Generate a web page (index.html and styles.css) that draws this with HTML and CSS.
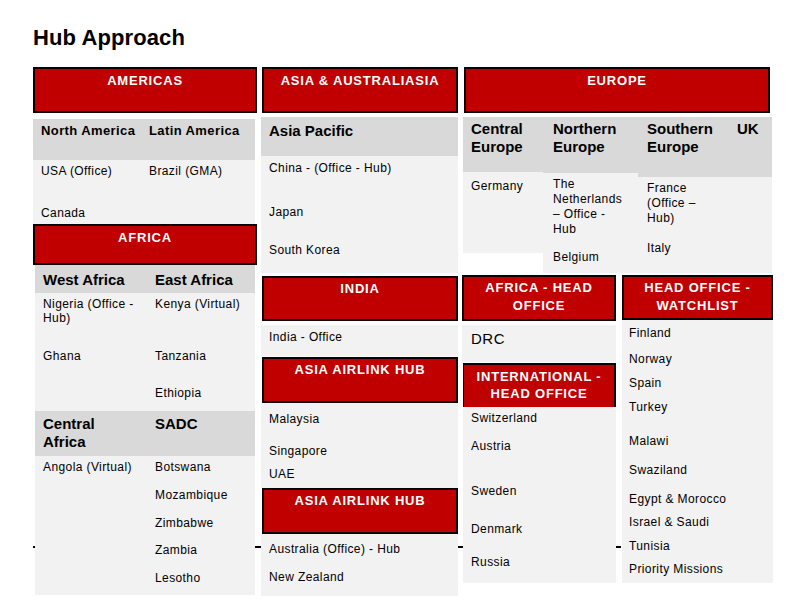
FILE: index.html
```html
<!DOCTYPE html>
<html lang="en">
<head>
<meta charset="utf-8">
<title>Hub Approach</title>
<link rel="stylesheet" href="styles.css">
</head>
<body>
<div class="page">
  <h1 class="title">Hub Approach</h1>
  <div class="rule"></div>
  <div class="board">

    <!-- Column 1 -->
    <div class="col col-1">
      <div class="hd hd-americas">AMERICAS</div>
      <div class="sub sub-am-head pair pair-am">
        <div class="sh13">North America</div>
        <div class="sh13">Latin America</div>
      </div>
      <div class="body body-am pair pair-am">
        <div>
          <div class="t">USA (Office)</div>
          <div class="t mt28">Canada</div>
        </div>
        <div>
          <div class="t">Brazil (GMA)</div>
        </div>
      </div>
      <div class="hd hd-africa">AFRICA</div>
      <div class="sub sub-af-head pair pair-af inset">
        <div class="sh15">West Africa</div>
        <div class="sh15">East Africa</div>
      </div>
      <div class="body body-af pair pair-af inset">
        <div>
          <div class="t">Nigeria (Office -<br>Hub)</div>
          <div class="t mt24">Ghana</div>
        </div>
        <div>
          <div class="t">Kenya (Virtual)</div>
          <div class="t mt38">Tanzania</div>
          <div class="t mt23">Ethiopia</div>
        </div>
      </div>
      <div class="sub sub-ca-head pair pair-af inset">
        <div class="sh15">Central<br>Africa</div>
        <div class="sh15">SADC</div>
      </div>
      <div class="body body-ca pair pair-af inset">
        <div>
          <div class="t">Angola (Virtual)</div>
        </div>
        <div>
          <div class="t">Botswana</div>
          <div class="t mt14">Mozambique</div>
          <div class="t mt14">Zimbabwe</div>
          <div class="t mt13">Zambia</div>
          <div class="t mt14">Lesotho</div>
        </div>
      </div>
    </div>

    <!-- Column 2 -->
    <div class="col col-2">
      <div class="hd hd-asia">ASIA &amp; AUSTRALIASIA</div>
      <div class="sub sub-ap-head">
        <div class="sh15">Asia Pacific</div>
      </div>
      <div class="body body-ap">
        <div class="t">China - (Office - Hub)</div>
        <div class="t mt30">Japan</div>
        <div class="t mt24">South Korea</div>
      </div>
      <div class="hd hd-india">INDIA</div>
      <div class="body body-india">
        <div class="t">India - Office</div>
      </div>
      <div class="hd hd-airlink1">ASIA AIRLINK HUB</div>
      <div class="body body-air1">
        <div class="t">Malaysia</div>
        <div class="t mt18">Singapore</div>
        <div class="t mt9">UAE</div>
      </div>
      <div class="hd hd-airlink2">ASIA AIRLINK HUB</div>
      <div class="body body-air2">
        <div class="t">Australia (Office) - Hub</div>
        <div class="t mt14">New Zealand</div>
      </div>
    </div>

    <!-- Right area -->
    <div class="col col-3">
      <div class="hd hd-europe">EUROPE</div>
      <div class="eu">
        <div class="eu-col eu-central">
          <div class="sub eu-head-c"><div class="sh15">Central<br>Europe</div></div>
          <div class="body eu-body-c">
            <div class="t">Germany</div>
          </div>
        </div>
        <div class="eu-col eu-northern">
          <div class="sub eu-head-n"><div class="sh15">Northern<br>Europe</div></div>
          <div class="body eu-body-n">
            <div class="t t15">The<br>Netherlands<br>– Office -<br>Hub</div>
            <div class="t mt13">Belgium</div>
          </div>
        </div>
        <div class="eu-col eu-southern">
          <div class="sub eu-head-s">
            <div class="sh15">Southern<br>Europe</div>
            <div class="sh15">UK</div>
          </div>
          <div class="body eu-body-s">
            <div class="t t15">France<br>(Office –<br>Hub)</div>
            <div class="t mt15">Italy</div>
          </div>
        </div>
      </div>

      <div class="lower">
        <div class="col col-a">
          <div class="hd hd-two hd-afho">AFRICA - HEAD OFFICE</div>
          <div class="body body-drc">
            <div class="t-big">DRC</div>
          </div>
          <div class="hd hd-two hd-intl">INTERNATIONAL -<br>HEAD OFFICE</div>
          <div class="body body-intl">
            <div class="t">Switzerland</div>
            <div class="t mt14">Austria</div>
            <div class="t mt31">Sweden</div>
            <div class="t mt24">Denmark</div>
            <div class="t mt19">Russia</div>
          </div>
        </div>
        <div class="col col-b">
          <div class="hd hd-two hd-watch">HEAD OFFICE - WATCHLIST</div>
          <div class="body body-watch">
            <div class="t">Finland</div>
            <div class="t mt12">Norway</div>
            <div class="t mt10">Spain</div>
            <div class="t mt10">Turkey</div>
            <div class="t mt20">Malawi</div>
            <div class="t mt15">Swaziland</div>
            <div class="t mt15">Egypt &amp; Morocco</div>
            <div class="t mt9">Israel &amp; Saudi</div>
            <div class="t mt10">Tunisia</div>
            <div class="t mt9">Priority Missions</div>
          </div>
        </div>
      </div>
    </div>

  </div>
</div>
</body>
</html>
```

FILE: styles.css
```css
* { box-sizing: border-box; }

html {
  margin: 0;
  padding: 0;
  background: #ffffff;
}

body {
  margin: 0;
  padding: 0;
  font-family: "Liberation Sans", Arial, sans-serif;
  color: #000;
  width: 800px;
  height: 600px;
  overflow: hidden;
}

.page {
  position: relative;
  padding: 25px 0 0 33px;
}

.title {
  margin: 0;
  font: bold 22px/26px "Liberation Sans", Arial, sans-serif;
  letter-spacing: 0.1px;
}

.rule {
  position: absolute;
  left: 33px;
  top: 546px;
  width: 588px;
  height: 2px;
  background: #000;
  z-index: -1;
}

.board {
  display: flex;
  align-items: flex-start;
  gap: 4px;
  margin-top: 16px;
}

.col {
  display: flex;
  flex-direction: column;
}

.col-1 { width: 224px; }
.col-2 { width: 197px; }
.col-3 { width: 311px; }

/* red header boxes */
.hd {
  background: #c00000;
  border: 2px solid #0d0000;
  color: #fff;
  font: bold 13px/16px "Liberation Sans", Arial, sans-serif;
  letter-spacing: 0.8px;
  text-align: center;
  padding: 4px 4px 0;
}

.hd-americas { height: 46px; }
.hd-africa { height: 41px; }
.hd-asia { height: 46px; margin-left: 1px; }
.hd-india { height: 45px; margin-top: 3px; margin-left: 1px; padding-top: 3px; }
.hd-airlink1 { height: 46px; margin-top: 1px; margin-left: 1px; padding-top: 3px; }
.hd-airlink2 { height: 46px; margin-left: 1px; padding-top: 3px; }
.hd-europe { height: 46px; margin: 0 3px 0 2px; padding-top: 4px; }

.hd-two {
  line-height: 18px;
  padding-top: 2px;
}
.hd-afho { height: 46px; }
.hd-watch { height: 45px; }
.hd-intl {
  height: 44px;
  margin-top: 1px;
  margin-left: 1px;
  line-height: 17px;
  padding-top: 3px;
  border-left-width: 1px;
  border-bottom: none;
}

/* grey sub heads and light bodies */
.sub { background: #d9d9d9; }
.body { background: #f2f2f2; }

.pair {
  display: grid;
  padding-left: 8px;
}
.pair-am { grid-template-columns: 108px 1fr; }
.pair-af { grid-template-columns: 112px 1fr; }
.inset { margin-left: 2px; margin-right: 2px; }

.sub-am-head { height: 41px; margin-top: 6px; margin-right: 2px; padding-top: 4px; }
.body-am { height: 64px; margin-right: 2px; padding-top: 4px; }

.sub-af-head { height: 28px; padding-top: 6px; }
.body-af { height: 118px; padding-top: 4px; }
.sub-ca-head { height: 45px; padding-top: 4px; }
.body-ca { height: 139px; padding-top: 4px; }

.sub-ap-head { height: 39px; margin-top: 4px; padding: 5px 0 0 8px; }
.body-ap { height: 117px; padding: 5px 0 0 8px; }
.body-india { height: 31px; margin-top: 4px; padding: 5px 0 0 8px; }
.body-air1 { height: 85px; padding: 9px 0 0 8px; }
.body-air2 { height: 62px; padding: 8px 0 0 8px; }

/* text styles */
.sh13 {
  font: bold 13px/15px "Liberation Sans", Arial, sans-serif;
  letter-spacing: 0.4px;
}
.sh15 {
  font: bold 15px/18px "Liberation Sans", Arial, sans-serif;
}
.t {
  font: 12px/14px "Liberation Sans", Arial, sans-serif;
  letter-spacing: 0.4px;
  white-space: nowrap;
}
.t15 { line-height: 15px; }
.t-big {
  font: 15px/18px "Liberation Sans", Arial, sans-serif;
  letter-spacing: 0.5px;
}

.mt9 { margin-top: 9px; }
.mt10 { margin-top: 10px; }
.mt12 { margin-top: 12px; }
.mt13 { margin-top: 13px; }
.mt14 { margin-top: 14px; }
.mt15 { margin-top: 15px; }
.mt18 { margin-top: 18px; }
.mt19 { margin-top: 19px; }
.mt20 { margin-top: 20px; }
.mt23 { margin-top: 23px; }
.mt24 { margin-top: 24px; }
.mt28 { margin-top: 28px; }
.mt30 { margin-top: 30px; }
.mt31 { margin-top: 31px; }
.mt38 { margin-top: 38px; }

/* Europe block */
.eu {
  display: flex;
  align-items: flex-start;
  margin: 4px 1px 0 1px;
  height: 156px;
}
.eu-col { display: flex; flex-direction: column; }
.eu-central { width: 80px; }
.eu-northern { width: 95px; }
.eu-southern { width: 134px; }

.eu-head-c { height: 55px; padding: 3px 0 0 8px; }
.eu-body-c { height: 81px; padding: 7px 0 0 8px; }

.eu-head-n { height: 56px; padding: 3px 0 0 10px; }
.eu-body-n { height: 100px; padding: 4px 0 0 10px; }

.eu-head-s {
  height: 60px;
  padding: 3px 0 0 9px;
  display: grid;
  grid-template-columns: 90px 1fr;
}
.eu-body-s { height: 96px; padding: 4px 0 0 9px; }

/* lower right */
.lower {
  display: flex;
  align-items: flex-start;
  gap: 6px;
  margin-top: 2px;
}
.col-a { width: 154px; }
.col-b { width: 151px; }

.body-drc { height: 37px; margin-top: 4px; padding: 5px 0 0 9px; }
.body-intl { height: 176px; margin-left: 1px; padding: 4px 0 0 8px; }
.body-watch { height: 263px; padding: 6px 0 0 7px; }
```
